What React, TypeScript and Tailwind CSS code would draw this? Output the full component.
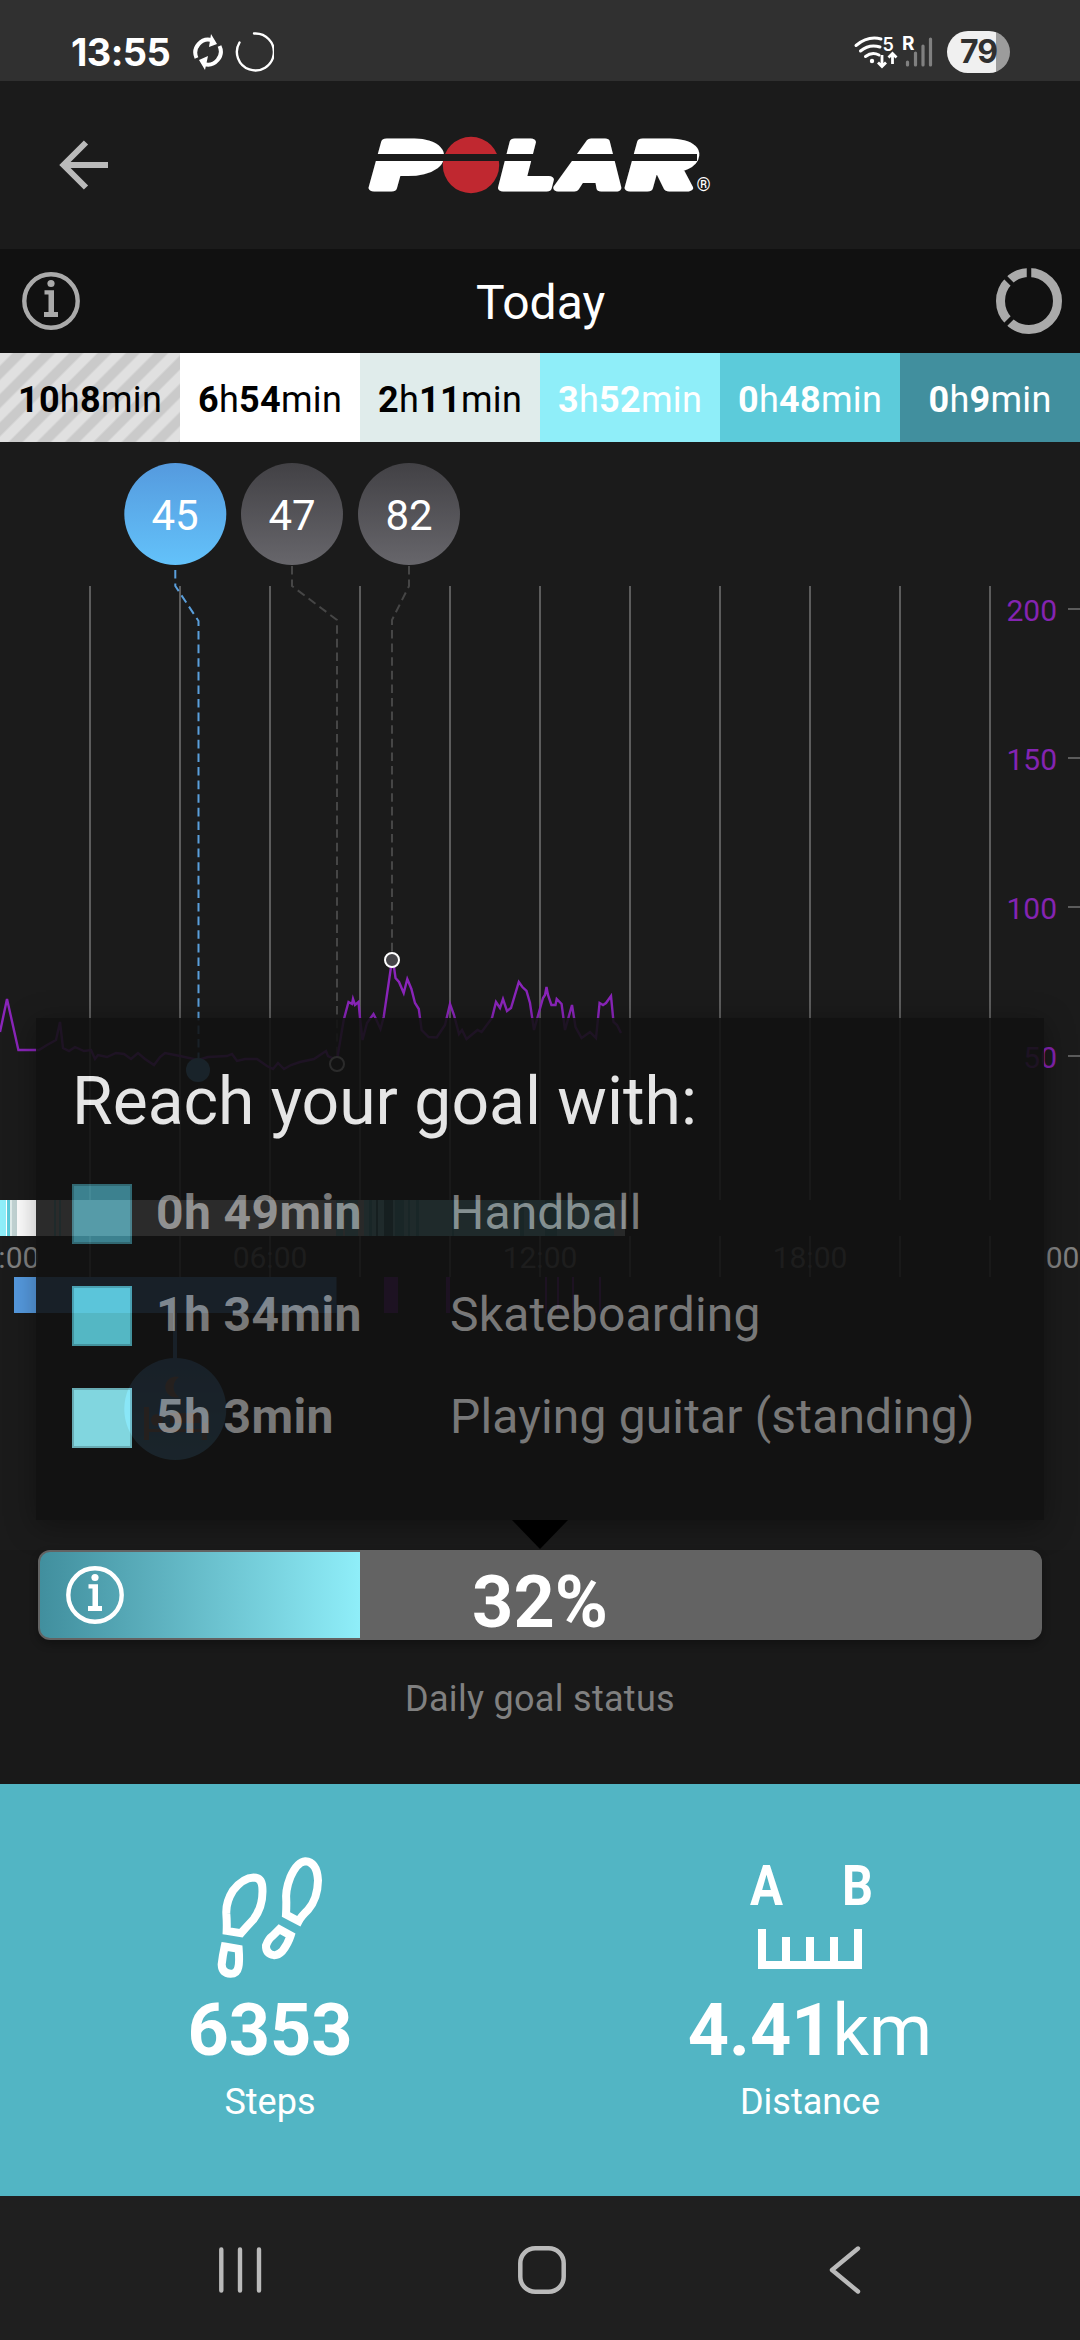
import React from 'react';

const ZONES = [
  { h: '10', m: '8', className: 'bg-[repeating-linear-gradient(135deg,#e0e0e0_0px,#e0e0e0_8px,#cacaca_10px,#cacaca_18px,#e0e0e0_20px)] text-black' },
  { h: '6', m: '54', className: 'bg-white text-black' },
  { h: '2', m: '11', className: 'bg-[#e0eceb] text-black' },
  { h: '3', m: '52', className: 'bg-[#8feef9] text-white' },
  { h: '0', m: '48', className: 'bg-[#5ccbda] text-white' },
  { h: '0', m: '9', className: 'bg-[#418f9e] text-white' },
];

const GOALS = [
  { time: '0h 49min', name: 'Handball', color: 'bg-[#418f9e]' },
  { time: '1h 34min', name: 'Skateboarding', color: 'bg-[#5ccbda]' },
  { time: '5h 3min', name: 'Playing guitar (standing)', color: 'bg-[#8feef9]' },
];

const GRID = [90, 180, 270, 360, 450, 540, 630, 720, 810, 900, 990];

const BPM = [
  { label: '200', y: 609 },
  { label: '150', y: 758 },
  { label: '100', y: 907 },
  { label: '50', y: 1056 },
];

const HOURS = [
  { label: '00:00', x: 2 },
  { label: '06:00', x: 270 },
  { label: '12:00', x: 540 },
  { label: '18:00', x: 810 },
  { label: '00:00', x: 1083 },
];

// [x, width, color]
const ACTIVITY: [number, number, string][] = [
  [0, 6, '#8feef9'],
  [6, 1, '#ffffff'],
  [7, 3, '#5ccbda'],
  [10, 2, '#e0eceb'],
  [12, 5, '#c2d4d4'],
  [17, 319, '#ffffff'],
  [54, 2, '#8feef9'],
  [59, 2, '#8feef9'],
  [336, 278, '#8feef9'],
  [343, 2, '#e0eceb'],
  [358, 6, '#e0eceb'],
  [369, 3, '#5ccbda'],
  [376, 2, '#418f9e'],
  [384, 9, '#418f9e'],
  [395, 9, '#5ccbda'],
  [408, 2, '#5ccbda'],
  [416, 3, '#5ccbda'],
  [452, 2, '#5ccbda'],
  [520, 4, '#5ccbda'],
  [545, 12, '#5ccbda'],
  [614, 11, '#e0eceb'],
];

const HEART_RATE =
  '0,1032 7,999 18.4,1050 39,1050 47,1045 56,1040 60,1022 63,1048 69,1051 75,1047 84,1051 91,1050 95,1059 98,1055 107,1057 116,1053 124,1054 131,1059 138,1053 145,1059 154,1065 160,1057 165,1053 180,1056 198,1060 208,1057 227,1056 232,1054 237,1061 245,1059 257,1059 267,1066 273,1069 278,1063 284,1069 291,1065 300,1062 314,1059 326,1051 328,1056 337,1060 343.7,1020 348.5,1002 352,1004 353,999 355,1005 358.5,1002 360,1018 362.5,1040 367,1023 373.5,1014 375.5,1018 380.5,1029 383.7,1017 391,967 394,967 395.5,978 399,982 403.7,993 407.3,979 411.4,989 415,1003 418.8,1009 421.6,1030 428.6,1037 436.7,1037.5 445,1025 450,1004 454,1015 459,1034 462,1030 466.5,1039 477.5,1030 481.6,1032 492,1018 496,1002 500,1008 503,999 507,1011 511,1008 518.8,982 522.4,987 526.5,991 530,1003 534,1030 539.6,1010 543,998 545,995 546.5,987 548,995 551.4,1005 555.5,1005 556.7,999 561.6,1004 565,1030 572,1005 575.5,1027 581.6,1038 590,1032 596,1038 599.6,1003 603,1005 606,1003 611,996 613.5,1022 617,1025 621,1033';

const InfoIcon: React.FC<{ className: string }> = ({ className }) => (
  <svg viewBox="0 0 58 58" className={className} fill="currentColor">
    <circle cx="29" cy="29" r="26.7" fill="none" stroke="currentColor" strokeWidth="4.4" />
    <circle cx="29" cy="11.5" r="3.6" />
    <path d="M22.5 18.2H32V40H36V45H22V40H26.5V22.5H22.5Z" />
  </svg>
);

const StatusBar: React.FC = () => (
  <div className="flex h-[81px] items-center bg-[#303030] pl-[71px] pr-[70px] pt-[23px] text-white">
    <span className="w-[102px] whitespace-nowrap font-['Inter'] text-[38px] font-bold leading-[48px] tracking-[-0.6px]">13:55</span>
    <svg viewBox="0 0 34 40" className="ml-[18px] h-[40px] w-[34px]" fill="none" stroke="#fff" strokeWidth="4">
      <path d="M5.5 26A13 13 0 0 1 21 8.2M28.5 14A13 13 0 0 1 13 32" />
      <path d="M20 2L26 12L18 15ZM14 38L8 28L17 24Z" fill="#fff" stroke="none" />
    </svg>
    <svg viewBox="0 0 40 40" className="ml-[9px] h-[40px] w-[40px]" fill="none" stroke="#fff" strokeWidth="2.4" strokeLinecap="round">
      <path d="M20 1.5A18.5 18.5 0 1 1 5.5 10.5" />
    </svg>
    <div className="ml-auto flex items-center">
      <svg viewBox="0 0 44 36" className="h-[36px] w-[44px] overflow-visible" fill="none" stroke="#fff" strokeWidth="3">
        <path d="M2 11.5Q14 1.5 27 5M6.5 17Q15.5 9.5 26 13M11.500 22.5Q18 17.5 25 21" strokeLinecap="round" />
        <circle cx="18" cy="27" r="2.2" fill="#fff" stroke="none" />
        <path d="M28 21V32M24 28.5L28 32.5L32 28.5M38.5 30V20M34.5 23.5L38.5 19.5L42.5 23.5" strokeWidth="2.8" />
        <text x="28.5" y="17" fill="#fff" stroke="none" fontSize="18" fontWeight="600" fontFamily="Inter, sans-serif">5</text>
      </svg>
      <svg viewBox="0 0 32 36" className="ml-[4px] h-[36px] w-[32px] overflow-visible" stroke="#808080" strokeWidth="3.2" strokeLinecap="round">
        <path d="M5.500 28V31M13.500 19V31M21 12V31M28.500 5V31" />
        <text x="0" y="16" fill="#fff" stroke="none" fontSize="19" fontWeight="700" fontFamily="Inter, sans-serif">R</text>
      </svg>
      <div className="ml-[13px] flex h-[42px] w-[63px] items-center justify-center rounded-full bg-[linear-gradient(90deg,#f0f0f0_77.5%,#9c9c9c_77.5%)] font-['Inter'] text-[32px] font-bold leading-[42px] tracking-[-1px] text-[#303030]">
        79
      </div>
    </div>
  </div>
);

const Logo: React.FC = () => (
  <svg viewBox="365 130 350 70" className="h-[70px] w-[350px] overflow-visible">
    <g fill="#fff" stroke="#fff" strokeWidth="7" strokeLinejoin="round" fontFamily="Roboto, sans-serif" fontWeight="900" fontStyle="italic" fontSize="64">
      <text x="374" y="187.5" textLength="65" lengthAdjust="spacingAndGlyphs">P</text>
      <text x="503" y="187.5" textLength="50" lengthAdjust="spacingAndGlyphs">L</text>
      <text x="563" y="187.5" textLength="58" lengthAdjust="spacingAndGlyphs">A</text>
      <text x="630" y="187.5" textLength="65" lengthAdjust="spacingAndGlyphs">R</text>
    </g>
    <circle cx="471" cy="165" r="28.2" fill="#c02830" />
    <rect x="365" y="154" width="332" height="7" fill="#1b1b1b" />
    <text x="703.5" y="191" textAnchor="middle" fill="#fff" fontSize="18" fontFamily="Roboto, sans-serif">®</text>
  </svg>
);

const HeartRateChart: React.FC = () => (
  // the view box starts at the chart's offset on the screen
  <svg viewBox="0 442 1080 1108" className="block h-[1108px] w-[1080px]" fontFamily="Roboto, sans-serif">
    <defs>
      <linearGradient id="sleep" x1="0" y1="0" x2="0" y2="1">
        <stop offset="0" stopColor="#559ade" />
        <stop offset="1" stopColor="#63c2fa" />
      </linearGradient>
      <linearGradient id="bubble" x1="0" y1="0" x2="0" y2="1">
        <stop offset="0" stopColor="#424145" />
        <stop offset="1" stopColor="#67666b" />
      </linearGradient>
    </defs>
    {GRID.map((x) => (
      <path key={x} d={`M${x} 586V1200M${x} 1236V1277`} stroke="#5c5c5c" strokeWidth="2" />
    ))}
    {BPM.map(({ label, y }) => (
      <g key={label}>
        <text x="1057" y={y + 11.5} textAnchor="end" fontSize="30" fill="#8424b2">{label}</text>
        <path d={`M1068 ${y}H1080`} stroke="#5c5c5c" strokeWidth="2" />
      </g>
    ))}

    <g fill="none" stroke="#464646" strokeWidth="2" strokeDasharray="8.6 5">
      <path d="M175.3 570V586L198.5 621V1060" stroke="#5a9fdc" />
      <path d="M292 566V586L337 620V1056" />
      <path d="M409 566V586L392 620V952" />
    </g>
    <polyline points={HEART_RATE} fill="none" stroke="#8a25ba" strokeWidth="2.4" />
    <circle cx="198" cy="1070" r="12" fill="#5fb4ee" />
    <circle cx="337" cy="1064" r="7" fill="#1b1b1b" stroke="#fff" strokeWidth="2" />
    <circle cx="392" cy="960" r="7" fill="#464549" stroke="#fff" strokeWidth="2" />

    <circle cx="175.3" cy="514" r="51" fill="url(#sleep)" />
    <circle cx="292" cy="514" r="51" fill="url(#bubble)" />
    <circle cx="409" cy="514" r="51" fill="url(#bubble)" />
    <g fill="#fff" fontSize="42" textAnchor="middle">
      <text x="175" y="530">45</text>
      <text x="292" y="530">47</text>
      <text x="409" y="530">82</text>
    </g>

    {ACTIVITY.map(([x, width, color]) => (
      <rect key={x} x={x} y="1200" width={width} height="36" fill={color} />
    ))}
    {HOURS.map(({ label, x }) => (
      <text key={x} x={x} y="1268" textAnchor="middle" fontSize="30" fill="#808080">{label}</text>
    ))}

    <rect x="14" y="1277" width="322.5" height="36" fill="#569adf" />
    <path d="M384 1277h14v36h-14zM446 1277h4v36h-4zM545 1277h2v36h-2zM557 1277h2v36h-2zM572 1277h2v36h-2zM599 1277h2v36h-2z" fill="#7d22ac" />
    <path d="M175 1313V1360" stroke="#569adf" strokeWidth="4" />
    <circle cx="175.3" cy="1409" r="51" fill="url(#sleep)" />
    <g fill="#c89a8a">
      <path d="M179 1377A10.5 10.5 0 1 0 179 1397A12 12 0 0 1 179 1377Z" />
      <circle cx="157" cy="1420" r="6" />
      <path d="M144 1407h5v22h53v-12q0-4-4-4h-28v10h37v17h-5v-8h-53v8h-5z" />
    </g>
  </svg>
);

const GoalTooltip: React.FC = () => (
  <div className="absolute left-[36px] top-[576px] h-[502px] w-[1008px] bg-[#111111] px-[36px] pt-[51px] opacity-[0.886] shadow-[0_6px_28px_rgba(0,0,0,0.35)]">
    <h2 className="text-[66px] leading-[66px] text-white">Reach your goal with:</h2>
    <ul className="mt-[49px] flex flex-col gap-[42px]">
      {GOALS.map(({ time, name, color }) => (
        <li key={name} className="flex h-[60px] text-[48px] leading-[57px] tracking-[0.15px] text-[#848484]">
          <span className={`h-[60px] w-[60px] border-2 border-black/20 ${color}`} />
          <span className="ml-[24px] w-[294px] font-bold tracking-[0.4px]">{time}</span>
          <span>{name}</span>
        </li>
      ))}
    </ul>
  </div>
);

const StepsIcon: React.FC = () => (
  <svg viewBox="112 80 318 362" className="h-[121px] w-[106px]" fill="none" stroke="#fff" strokeWidth="24">
    <path d="M141 301L184 308Q202 287 222 266Q252 225 248 170Q246 141 222 141Q190 142 160 180Q138 215 140 250Q142 275 141 301Z" />
    <path d="M135 348L177 355Q180 395 176 410Q172 430 153 430Q127 428 126 402Q129 375 135 348Z" />
    <path d="M319 252L357 272Q364 258 385 238Q414 205 415 150Q412 94 377 92Q352 94 332 140Q316 180 320 215Q320 235 319 252Z" />
    <path d="M299 296L333 315Q325 340 308 362Q295 375 283 374Q258 370 259 345Q266 325 280 315Z" />
  </svg>
);

const DistanceIcon: React.FC = () => (
  <svg viewBox="0 0 124 121" className="h-[121px] w-[124px] overflow-visible" fill="#fff">
    <g fontFamily="Roboto, sans-serif" fontWeight="700" fontSize="56">
      <text x="2" y="48" textLength="33" lengthAdjust="spacingAndGlyphs">A</text>
      <text x="94" y="48" textLength="31" lengthAdjust="spacingAndGlyphs">B</text>
    </g>
    <path d="M10 72h8v32h16v-24h8v24h16v-24h8v24h16v-24h8v24h16v-32h8v40h-104z" />
  </svg>
);

const App: React.FC = () => {
  return (
    <div className="flex h-[2340px] w-[1080px] flex-col overflow-hidden bg-[#1b1b1b] font-['Roboto',sans-serif]">
      <StatusBar />

      <header className="grid h-[168px] grid-cols-[1fr_350px_1fr] items-center bg-[#1b1b1b]">
        <svg viewBox="0 0 50 50" className="ml-[59px] h-[50px] w-[50px]" fill="none" stroke="#bababa" strokeWidth="6">
          <path d="M49 25H5M27 2.5L4.5 25L27 47.5" />
        </svg>
        <Logo />
      </header>

      <div className="flex h-[104px] items-center justify-between bg-[#111111] pl-[22px] pr-[18px]">
        <InfoIcon className="h-[58px] w-[58px] text-[#aaaaaa]" />
        <h1 className="pl-[5px] pt-[3px] text-[48px] leading-[58px] text-white">Today</h1>
        <svg viewBox="0 0 66 66" className="h-[66px] w-[66px]" fill="none">
          <circle cx="33" cy="33" r="28.5" stroke="#aaaaaa" strokeWidth="9" />
          <path d="M33 0V12M9 9L19 19M9 57L19 47" stroke="#111111" strokeWidth="4.5" />
        </svg>
      </div>

      <div className="grid h-[89px] grid-cols-6">
        {ZONES.map(({ h, m, className }) => (
          <div key={h + m} className={`flex items-center justify-center pt-1 text-[36px] leading-[44px] tracking-[0.3px] ${className}`}>
            <b>{h}</b>h<b>{m}</b>min
          </div>
        ))}
      </div>

      <section className="relative h-[1108px]">
        <HeartRateChart />
        <GoalTooltip />
        <svg viewBox="0 0 56 29" className="absolute left-[512px] top-[1078px] h-[29px] w-[56px]">
          <path d="M0 0H56L28 29Z" fill="#000" />
        </svg>
      </section>

      <section className="flex h-[234px] flex-col items-center bg-[#191919]">
        <div className="relative flex h-[90px] w-[1004px] justify-center rounded-xl border-2 border-[#636363] bg-[#636363] shadow-[0_4px_8px_rgba(0,0,0,0.3)]">
          <div className="absolute inset-y-0 left-0 flex w-[32%] items-center rounded-l-[10px] bg-gradient-to-r from-[#418f9e] to-[#8feef9] pl-[26px]">
            <InfoIcon className="h-[58px] w-[58px] text-white" />
          </div>
          <span className="relative pt-[15px] text-[72px] font-bold leading-[72px] text-white">32%</span>
        </div>
        <p className="mt-[37px] text-[36px] leading-[44px] tracking-[0.3px] text-[#808080]">Daily goal status</p>
      </section>

      <section className="grid h-[412px] grid-cols-2 bg-[#52b5c4] pt-[73px] text-white">
        <div className="flex flex-col items-center">
          <StepsIcon />
          <p className="mt-[17px] text-[72px] font-bold leading-[72px]">6353</p>
          <p className="mt-[13px] text-[36px] leading-[44px]">Steps</p>
        </div>
        <div className="flex flex-col items-center">
          <DistanceIcon />
          <p className="mt-[17px] text-[72px] leading-[72px]"><b>4.41</b>km</p>
          <p className="mt-[13px] text-[36px] leading-[44px]">Distance</p>
        </div>
      </section>

      <nav className="flex h-[144px] items-center justify-between bg-[#1f1f1f] pl-[218px] pr-[218px] pt-1">
        <svg viewBox="0 0 44 50" className="h-[50px] w-[44px]" stroke="#bababa" strokeWidth="4.4" strokeLinecap="round">
          <path d="M3.3 4.5V45.5M22 4.5V45.5M41 4.5V45.5" />
        </svg>
        <svg viewBox="0 0 50 50" className="mr-[6px] h-[50px] w-[50px]" fill="none" stroke="#bababa" strokeWidth="4.5">
          <rect x="3.3" y="3.3" width="43.4" height="43.4" rx="15" />
        </svg>
        <svg viewBox="0 0 34 50" className="h-[50px] w-[34px]" fill="none" stroke="#bababa" strokeWidth="4.4" strokeLinecap="round" strokeLinejoin="round">
          <path d="M30 3.5L4 25L30 46.5" />
        </svg>
      </nav>
    </div>
  );
};

export default App;
